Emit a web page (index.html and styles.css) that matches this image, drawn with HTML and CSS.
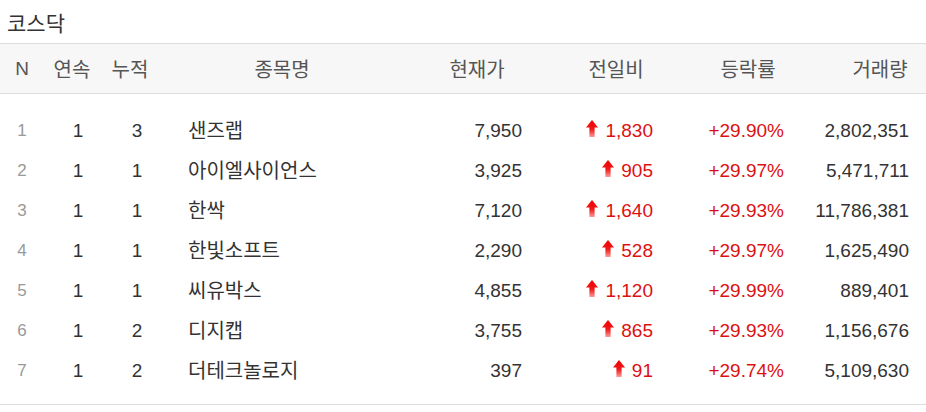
FILE: index.html
```html
<!DOCTYPE html>
<html lang="ko">
<head>
<meta charset="utf-8">
<title>코스닥</title>
<link rel="stylesheet" href="styles.css">
</head>
<body>
<svg width="0" height="0" class="defs" aria-hidden="true">
  <defs>
    <linearGradient id="upg" x1="0" y1="0" x2="0" y2="1">
      <stop offset="0" stop-color="#f00000"/>
      <stop offset="0.55" stop-color="#f01818"/>
      <stop offset="1" stop-color="#ff9a9a"/>
    </linearGradient>
  </defs>
</svg>
<div class="panel">
  <h2 class="title">코스닥</h2>
  <div class="table">
    <div class="row head">
      <div class="c c1">N</div>
      <div class="c c2">연속</div>
      <div class="c c3">누적</div>
      <div class="c c4">종목명</div>
      <div class="c c5">현재가</div>
      <div class="c c6">전일비</div>
      <div class="c c7">등락률</div>
      <div class="c c8">거래량</div>
    </div>
    <div class="body">
      <div class="row data">
        <div class="c c1">1</div><div class="c c2">1</div><div class="c c3">3</div>
        <div class="c c4">샌즈랩</div><div class="c c5">7,950</div>
        <div class="c c6 up"><svg class="arrow" viewBox="0 0 12 17"><path d="M6 0 L12 7.5 H8.6 V17 H3.4 V7.5 H0 Z" fill="url(#upg)"/></svg>1,830</div>
        <div class="c c7 up">+29.90%</div><div class="c c8">2,802,351</div>
      </div>
      <div class="row data">
        <div class="c c1">2</div><div class="c c2">1</div><div class="c c3">1</div>
        <div class="c c4">아이엘사이언스</div><div class="c c5">3,925</div>
        <div class="c c6 up"><svg class="arrow" viewBox="0 0 12 17"><path d="M6 0 L12 7.5 H8.6 V17 H3.4 V7.5 H0 Z" fill="url(#upg)"/></svg>905</div>
        <div class="c c7 up">+29.97%</div><div class="c c8">5,471,711</div>
      </div>
      <div class="row data">
        <div class="c c1">3</div><div class="c c2">1</div><div class="c c3">1</div>
        <div class="c c4">한싹</div><div class="c c5">7,120</div>
        <div class="c c6 up"><svg class="arrow" viewBox="0 0 12 17"><path d="M6 0 L12 7.5 H8.6 V17 H3.4 V7.5 H0 Z" fill="url(#upg)"/></svg>1,640</div>
        <div class="c c7 up">+29.93%</div><div class="c c8">11,786,381</div>
      </div>
      <div class="row data">
        <div class="c c1">4</div><div class="c c2">1</div><div class="c c3">1</div>
        <div class="c c4">한빛소프트</div><div class="c c5">2,290</div>
        <div class="c c6 up"><svg class="arrow" viewBox="0 0 12 17"><path d="M6 0 L12 7.5 H8.6 V17 H3.4 V7.5 H0 Z" fill="url(#upg)"/></svg>528</div>
        <div class="c c7 up">+29.97%</div><div class="c c8">1,625,490</div>
      </div>
      <div class="row data">
        <div class="c c1">5</div><div class="c c2">1</div><div class="c c3">1</div>
        <div class="c c4">씨유박스</div><div class="c c5">4,855</div>
        <div class="c c6 up"><svg class="arrow" viewBox="0 0 12 17"><path d="M6 0 L12 7.5 H8.6 V17 H3.4 V7.5 H0 Z" fill="url(#upg)"/></svg>1,120</div>
        <div class="c c7 up">+29.99%</div><div class="c c8">889,401</div>
      </div>
      <div class="row data">
        <div class="c c1">6</div><div class="c c2">1</div><div class="c c3">2</div>
        <div class="c c4">디지캡</div><div class="c c5">3,755</div>
        <div class="c c6 up"><svg class="arrow" viewBox="0 0 12 17"><path d="M6 0 L12 7.5 H8.6 V17 H3.4 V7.5 H0 Z" fill="url(#upg)"/></svg>865</div>
        <div class="c c7 up">+29.93%</div><div class="c c8">1,156,676</div>
      </div>
      <div class="row data">
        <div class="c c1">7</div><div class="c c2">1</div><div class="c c3">2</div>
        <div class="c c4">더테크놀로지</div><div class="c c5">397</div>
        <div class="c c6 up"><svg class="arrow" viewBox="0 0 12 17"><path d="M6 0 L12 7.5 H8.6 V17 H3.4 V7.5 H0 Z" fill="url(#upg)"/></svg>91</div>
        <div class="c c7 up">+29.74%</div><div class="c c8">5,109,630</div>
      </div>
    </div>
  </div>
</div>
</body>
</html>
```
FILE: styles.css
```css
html, body {
  margin: 0;
  padding: 0;
  background: #ffffff;
}
body {
  font-family: "Liberation Sans", "Noto Sans CJK KR", sans-serif;
  color: #333333;
  width: 926px;
  height: 412px;
  overflow: hidden;
}
.defs {
  position: absolute;
}
.title {
  margin: 0;
  height: 43px;
  padding-left: 7px;
  font-size: 21px;
  font-weight: normal;
  line-height: 44px;
  color: #333333;
  font-family: "Noto Sans CJK KR", sans-serif;
}
.table {
  border-top: 1px solid #dddddd;
  border-bottom: 1px solid #dddddd;
}
.row {
  display: grid;
  grid-template-columns: 44px 56px 60px 244px 146px 132px 132px 112px;
  align-items: center;
}
.head {
  height: 49px;
  background: #f7f7f7;
  border-bottom: 1px solid #dddddd;
  color: #555555;
  font-size: 20px;
}
.head .c {
  text-align: center;
  font-family: "Noto Sans CJK KR", sans-serif;
  line-height: 24px;
}
.head .c1 {
  font-family: "Liberation Sans", sans-serif;
  font-size: 19px;
}
.head .c8 {
  padding-left: 20px;
}
.body {
  padding: 17px 0 13px;
}
.data {
  height: 40px;
  font-size: 19px;
  line-height: 24px;
}
.data .c {
  display: flex;
  align-items: center;
  justify-content: flex-end;
}
.data .c1 {
  justify-content: center;
  color: #999999;
  font-size: 17px;
}
.data .c2 {
  justify-content: center;
  padding-left: 12px;
}
.data .c3 {
  justify-content: center;
  padding-left: 14px;
}
.data .c4 {
  justify-content: flex-start;
  padding-left: 28px;
  font-family: "Noto Sans CJK KR", sans-serif;
  font-size: 20px;
  margin-top: -2px;
}
.data .c5 {
  padding-right: 28px;
}
.data .c6 {
  padding-right: 29px;
}
.data .c7 {
  padding-right: 30px;
}
.data .c8 {
  padding-right: 17px;
}
.up {
  color: #dd1111;
}
.arrow {
  width: 12px;
  height: 17px;
  margin-right: 7px;
  margin-bottom: 6px;
  flex: none;
}
```
